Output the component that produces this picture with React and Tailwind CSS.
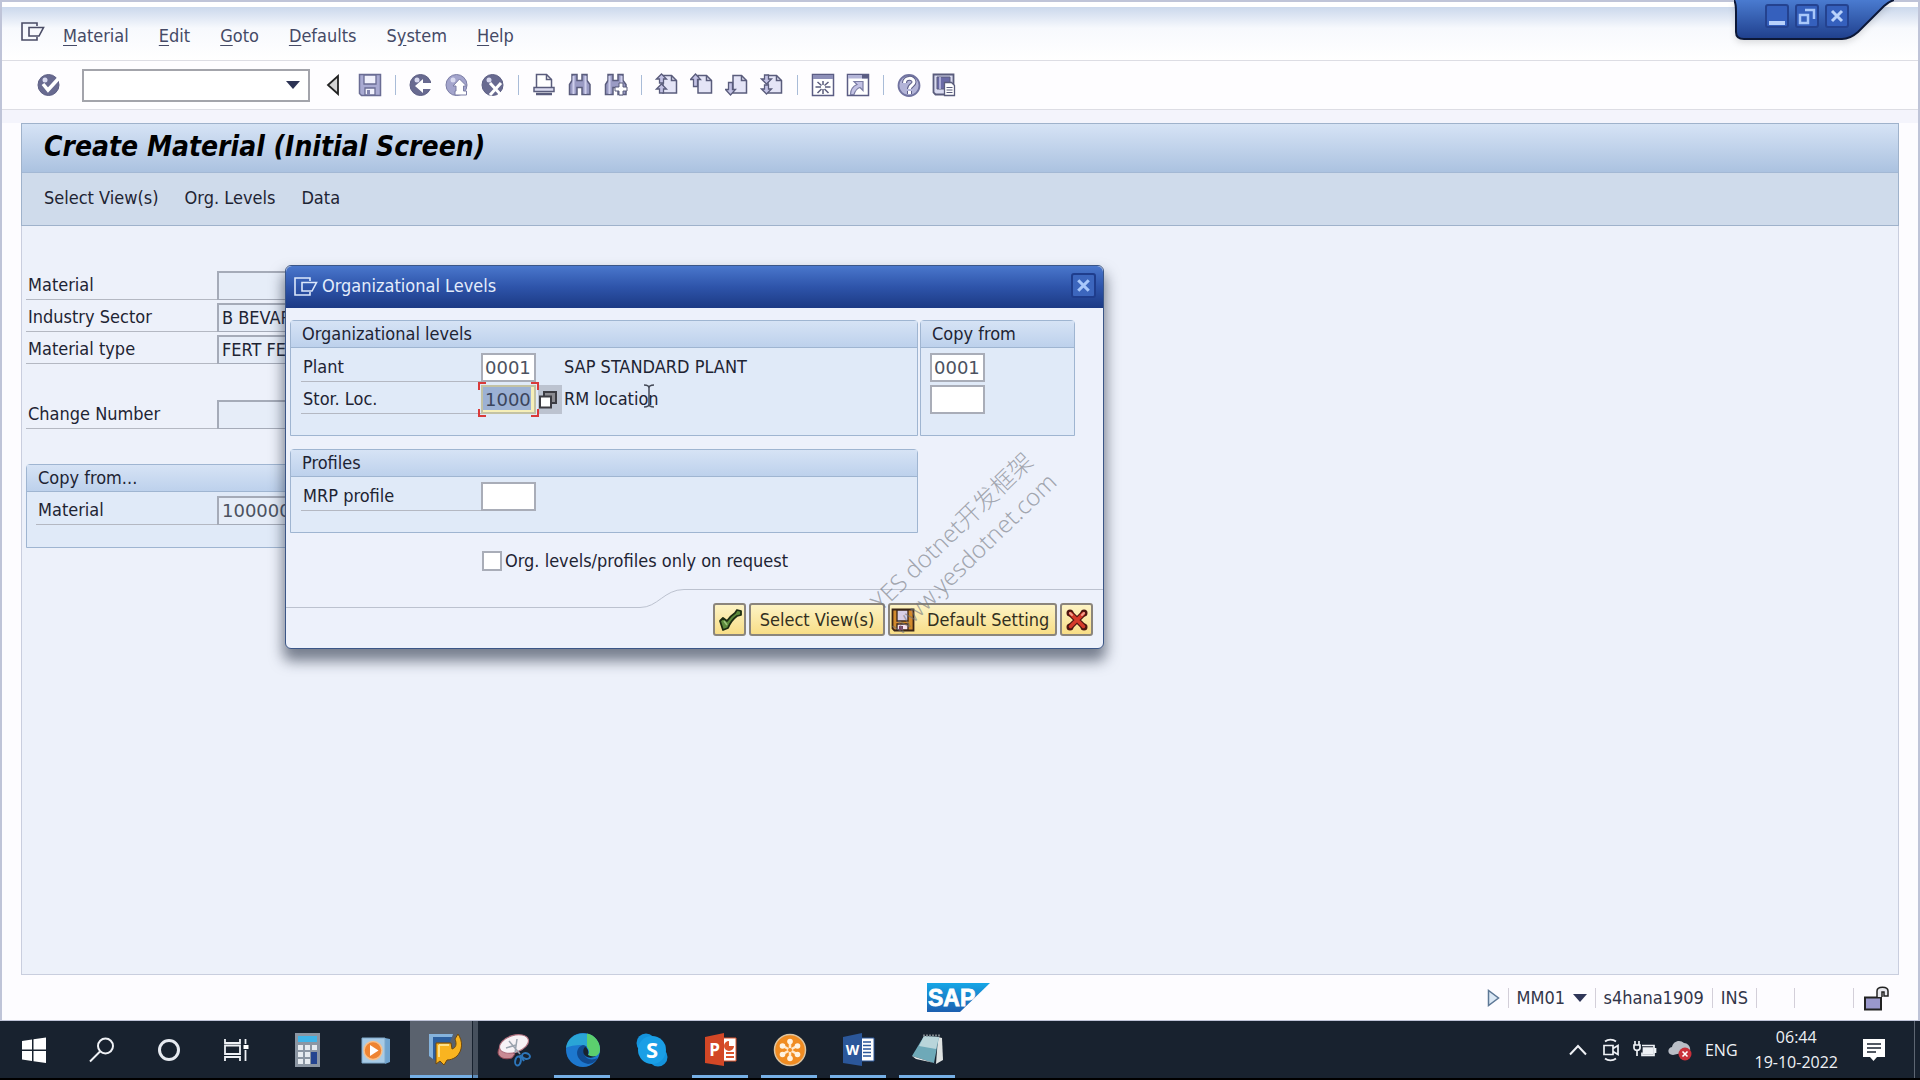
import React from "react";

const FONT = "font-['DejaVu_Sans_Condensed','DejaVu_Sans','Noto_Sans',sans-serif]";
const INK = "#5a5c7c";
const LILAC = "#c3c2e4";

function Icon({ size = 24, className = "", children }) {
  return (
    <svg width={size} height={size} viewBox="0 0 24 24" fill="none" className={"shrink-0 " + className} aria-hidden="true">
      {children}
    </svg>
  );
}

function ExitGlyph({ stroke }) {
  return (
    <svg width="24" height="20" viewBox="0 0 24 20" fill="none" stroke={stroke} strokeWidth="1.6" className="shrink-0" aria-hidden="true">
      <path d="M16 4V1H1v17h15v-3" />
      <path d="M8 5.500h14.500l-4.500 8.500H8z" />
    </svg>
  );
}

function Ball({ light, children }) {
  return (
    <Icon>
      <circle cx="11.500" cy="12" r="10.500" fill={light ? "#a3a4cc" : "#686a90"} stroke={light ? "#7c7ea6" : "#5d5f84"} />
      <circle cx="8" cy="7" r="2.500" fill="#d9daf0" />
      {children}
    </Icon>
  );
}

function Page({ arrow }) {
  return (
    <Icon>
      <path d="M8 2.500h8.500l5 5v12.500H8z" fill="#e4e4f6" stroke={INK} strokeWidth="1.500" />
      <path d="M16.500 2.500v5h5" stroke={INK} strokeWidth="1.500" />
      <g fill={LILAC} stroke={INK} strokeWidth="1.300">{arrow}</g>
    </Icon>
  );
}

function Binoculars({ plus }) {
  return (
    <Icon>
      <path d="M4 1.500h5v6h5v-6h5v6l3 4v10h-8v-7h-5v7H1.500v-10L4 7.500z" fill="#9a9bc4" stroke={INK} strokeWidth="1.500" />
      <path d="M5.500 3v18M17.500 3v18" stroke="#cfd0ec" strokeWidth="2" />
      {plus && <path d="M15 10h4v4h4v4h-4v4h-4v-4h-4v-4h4z" fill="#fff" stroke={INK} strokeWidth="1" />}
    </Icon>
  );
}

function ToolButton({ label, children }) {
  return (
    <button type="button" aria-label={label} className="flex w-[22px] justify-center">
      {children}
    </button>
  );
}

const Sep = () => <span className="h-5 w-px shrink-0 bg-[#a9bcd8]" />;

function MenuBar() {
  const items = [
    ["", "M", "aterial"],
    ["", "E", "dit"],
    ["", "G", "oto"],
    ["", "D", "efaults"],
    ["S", "y", "stem"],
    ["", "H", "elp"],
  ];
  return (
    <nav className="flex h-[54px] items-center border-b border-[#dddde4] bg-linear-to-b from-[#cbd8ec] via-[#f7f9fd] via-40% to-white pl-[19px]">
      <button type="button" aria-label="System menu" className="-mt-1 mr-[18px]">
        <ExitGlyph stroke="#4a4c66" />
      </button>
      <div className="flex gap-[30px] pt-1 text-lg text-[#454a66]">
        {items.map(([a, b, c]) => (
          <button type="button" key={b + c}>
            {a}
            <span className="underline underline-offset-3">{b}</span>
            {c}
          </button>
        ))}
      </div>
    </nav>
  );
}

function ToolBar() {
  return (
    <div className="flex h-[49px] items-center border-b border-[#dddde4] bg-[#fefdff] pl-9">
      <ToolButton label="Enter">
        <Ball>
          <path d="M6 11l5 6L22 5" stroke="#fff" strokeWidth="3.500" />
        </Ball>
      </ToolButton>
      <div className="relative ml-[22px] flex h-[33px] w-[228px] items-center border-2 border-[#a3a4ab] bg-white">
        <input aria-label="Command field" className="h-full w-full bg-transparent px-2 text-lg outline-none" />
        <button type="button" aria-label="Command history" className="mr-2 shrink-0">
          <svg width="14" height="8" viewBox="0 0 14 8" aria-hidden="true">
            <path d="M0 0h14L7 8z" fill="#2c3354" />
          </svg>
        </button>
      </div>
      <button type="button" aria-label="Collapse" className="mr-[19px] ml-4">
        <svg width="14" height="22" viewBox="0 0 14 22" aria-hidden="true">
          <path d="M12 2v18L2 11z" fill="#d4d4d4" stroke="#222" strokeWidth="1.800" />
        </svg>
      </button>
      <div className="flex items-center gap-[14px]">
        <ToolButton label="Save">
          <Icon>
            <path d="M1.500 1.500h21v21h-19l-2-2z" fill="#a9aad2" stroke="#6a6c94" strokeWidth="1.500" />
            <path d="M6 2h12v9H6zM7 15h10v7H7z" fill="#f1f1fc" stroke="#6a6c94" strokeWidth="1.300" />
            <path d="M9 17h3v5H9z" fill="#8385ae" />
          </Icon>
        </ToolButton>
        <Sep />
        <ToolButton label="Back">
          <Ball>
            <path d="M6 13l8-7v4h9v6h-9v4z" fill="#fff" />
          </Ball>
        </ToolButton>
        <ToolButton label="Exit">
          <Ball light>
            <path d="M14.500 6l7 7h-3v5h3v4H10v-4h1v-5H8z" fill="#fff" stroke="#7c7ea6" />
          </Ball>
        </ToolButton>
        <ToolButton label="Cancel">
          <Ball>
            <path d="M9 10l11 12M20 10L9 22" stroke="#fff" strokeWidth="3" />
          </Ball>
        </ToolButton>
        <Sep />
        <ToolButton label="Print">
          <Icon>
            <path d="M4.500 14V1.500h10l5 5V14" fill="#fff" stroke={INK} strokeWidth="1.500" />
            <path d="M14.500 1.500v5h5" stroke={INK} strokeWidth="1.500" />
            <path d="M2 14.500h20v4H2z" fill="#dcdcf0" stroke={INK} strokeWidth="1.500" />
            <path d="M4 21h16" stroke={INK} strokeWidth="2.500" />
          </Icon>
        </ToolButton>
        <ToolButton label="Find">
          <Binoculars />
        </ToolButton>
        <ToolButton label="Find next">
          <Binoculars plus />
        </ToolButton>
        <Sep />
        <div className="flex gap-[13px]">
          <ToolButton label="First page">
            <Page arrow={<><path d="M6.500 1l5 5h-3v4h-4V6h-3z" /><path d="M6.500 11l5 5h-3v4h-4v-4h-3z" /></>} />
          </ToolButton>
          <ToolButton label="Previous page">
            <Page arrow={<path d="M5.500 1l5 5.500h-3v7h-4v-7h-3z" />} />
          </ToolButton>
          <ToolButton label="Next page">
            <Page arrow={<path d="M5.500 22l5-5.500h-3v-7h-4v7h-3z" />} />
          </ToolButton>
          <ToolButton label="Last page">
            <Page arrow={<><path d="M6.500 11l-5-5h3V2h4v4h3z" /><path d="M6.500 21l-5-5h3v-4h4v4h3z" /></>} />
          </ToolButton>
        </div>
        <Sep />
        <div className="flex gap-[13px]">
          <ToolButton label="New session">
            <Icon>
              <path d="M1.500 1.500h21v21h-21z" fill="#fff" stroke="#5b5d84" strokeWidth="1.500" />
              <path d="M2 2h20v4H2z" fill="#8d8fb8" />
              <path d="M12 8v4M12 16v5M4.500 14H10M14 14h5.500M6.500 9l4 3.500M17.500 9l-4 3.500M6.500 20l4-4M17.500 20l-4-4" stroke={INK} strokeWidth="1.500" />
            </Icon>
          </ToolButton>
          <ToolButton label="Create shortcut">
            <Icon>
              <path d="M1.500 1.500h21v21h-21z" fill="#fff" stroke="#5b5d84" strokeWidth="1.500" />
              <path d="M2 2h20v3.500H2z" fill="#b4b5d8" />
              <path d="M16 2h6v3.500h-6z" fill="#5b5d84" />
              <path d="M8 8.500h9v9l-3-3c-4 1-5 4-6 7H4.500c0-5 2-8 6.500-10z" fill={LILAC} stroke="#7b7da4" strokeWidth="1.200" />
            </Icon>
          </ToolButton>
        </div>
        <Sep />
        <div className="flex gap-[13px]">
          <ToolButton label="Help">
            <Icon>
              <circle cx="12" cy="12.500" r="10.500" fill="#b3b4d8" stroke="#7173a0" strokeWidth="1.800" />
              <path d="M7.500 10c0-6 9.500-6 9.500-1 0 3.500-4.500 3-4.500 7M12.500 18v3" stroke="#5d5f88" strokeWidth="5" />
              <path d="M7.500 10c0-6 9.500-6 9.500-1 0 3.500-4.500 3-4.500 7M12.500 18v3" stroke="#fff" strokeWidth="3" />
            </Icon>
          </ToolButton>
          <ToolButton label="Customize layout">
            <Icon>
              <path d="M1.500 1.500h20v20h-18l-2-2z" fill="#d9daf0" stroke={INK} strokeWidth="1.800" />
              <path d="M5 4h13v12H5z" fill="#6a6aa6" stroke={INK} />
              <path d="M8 4v12" stroke="#c3c2e4" strokeWidth="1.500" />
              <path d="M12.500 9.500h7l3 3v10h-10z" fill="#fff" stroke={INK} strokeWidth="1.300" />
              <path d="M14.500 14.500h6M14.500 17h6M14.500 19.500h6" stroke={INK} />
            </Icon>
          </ToolButton>
        </div>
      </div>
    </div>
  );
}

function WindowTab() {
  const box = "size-6 rounded-[3px] border-2 border-[#24428f] bg-[#3560bd]";
  return (
    <div className="absolute top-0 right-[26px] h-[46px] w-[160px]">
      <svg width="160" height="46" viewBox="0 0 160 46" className="absolute inset-0 drop-shadow-md" aria-hidden="true">
        <defs>
          <linearGradient id="tab" x1="0" y1="0" x2="0" y2="1">
            <stop offset="0" stopColor="#4a7bd0" />
            <stop offset="1" stopColor="#1f3f8c" />
          </linearGradient>
        </defs>
        <path d="M0 0Q2 3 2 12V32Q2 39 10 39H108Q116 39 124 32L150 6Q154 2 160 0z" fill="url(#tab)" />
        <path d="M0 0Q2 3 2 12V32Q2 39 10 39H108Q116 39 124 32L150 6Q154 2 160 0" fill="none" stroke="#0c1838" strokeWidth="2" />
      </svg>
      <div className="relative flex gap-[6px] pt-1 pl-[31px]">
        <button type="button" aria-label="Minimize" className={box}>
          <svg viewBox="0 0 20 20" aria-hidden="true"><path d="M2 15h16v4H2z" fill="#b9d2fb" /></svg>
        </button>
        <button type="button" aria-label="Restore" className={box}>
          <svg viewBox="0 0 20 20" fill="none" stroke="#a9c8fa" strokeWidth="2.500" aria-hidden="true"><path d="M3 9h8v8H3zM8 4h9v9" /></svg>
        </button>
        <button type="button" aria-label="Close" className={box}>
          <svg viewBox="0 0 20 20" fill="none" stroke="#b9d2fb" strokeWidth="3" aria-hidden="true"><path d="M5 5l10 10M15 5L5 15" /></svg>
        </button>
      </div>
    </div>
  );
}

function Group({ title, className = "", children }) {
  return (
    <fieldset className={"rounded-t-sm border border-[#9fb5d1] bg-[#e0eaf8] " + className}>
      <div className="h-[27px] border-b border-[#9fb5d1] bg-linear-to-b from-[#d6e3f5] to-[#bdd1ec] pl-[11px] text-lg leading-[25px]">{title}</div>
      {children}
    </fieldset>
  );
}

function Row({ id, label, labelClass, children }) {
  return (
    <div className="flex h-[29px]">
      <label htmlFor={id} className={"shrink-0 border-b border-[#b4b8c2] pl-[2px] leading-7 " + labelClass}>{label}</label>
      {children}
    </div>
  );
}

function LockedField({ id, value, digits }) {
  return (
    <input
      id={id}
      readOnly
      defaultValue={value}
      className={"w-[330px] border border-t-2 border-l-2 border-[#a5abb8] bg-[#e6edf8] pl-[3px] outline-none " + (digits ? "font-['DejaVu_Sans',sans-serif] text-[#4c5260]" : "")}
    />
  );
}

function CodeField({ id, value = "", label }) {
  return (
    <input
      id={id}
      aria-label={label}
      defaultValue={value}
      className="block h-[29px] w-[55px] border-2 border-[#a9adb8] bg-white pl-[2px] font-['DejaVu_Sans',sans-serif] text-lg text-[#4c5260] outline-none"
    />
  );
}

function FormArea() {
  return (
    <form className="pt-[45px] pl-1 text-lg">
      <div className="flex flex-col gap-[3px]">
        <Row id="material" label="Material" labelClass="w-[191px]"><LockedField id="material" value="" /></Row>
        <Row id="sector" label="Industry Sector" labelClass="w-[191px]"><LockedField id="sector" value="B BEVARAGE" /></Row>
        <Row id="type" label="Material type" labelClass="w-[191px]"><LockedField id="type" value="FERT FERT" /></Row>
      </div>
      <div className="mt-9">
        <Row id="change" label="Change Number" labelClass="w-[191px]"><LockedField id="change" value="" /></Row>
      </div>
      <Group title="Copy from..." className="mt-[35px] w-[640px] pb-[22px]">
        <div className="pt-1 pl-[9px]">
          <Row id="copymat" label="Material" labelClass="w-[181px]"><LockedField id="copymat" value="1000001" digits /></Row>
        </div>
      </Group>
    </form>
  );
}

const goldButton =
  "flex h-[33px] items-center justify-center rounded-[3px] border-2 border-[#8b857c] bg-linear-to-b from-[#fdf3c4] to-[#f8dd86] text-[#33301f]";

function Dialog() {
  return (
    <section
      role="dialog"
      aria-label="Organizational Levels"
      className="absolute top-[265px] left-[285px] w-[819px] rounded-md border border-[#3b5687] bg-[#edf1fb] text-lg text-[#1e2433] shadow-[0_10px_14px_2px_rgba(40,50,70,0.6)]"
    >
      <header className="flex h-[42px] items-center rounded-t-md bg-linear-to-b from-[#4a77cc] via-[#2e54aa] to-[#1c3a84] pr-[7px] pl-2 text-[#e3ecfb]">
        <ExitGlyph stroke="#dbe7fb" />
        <h2 className="ml-1 flex-1 pb-[2px]">Organizational Levels</h2>
        <button type="button" aria-label="Close dialog" className="mb-1 size-[25px] rounded-[3px] border-2 border-[#1f3d8c] bg-[#3c66bd]">
          <svg viewBox="0 0 20 20" fill="none" stroke="#a9c8fa" strokeWidth="3" aria-hidden="true"><path d="M5 5l10 10M15 5L5 15" /></svg>
        </button>
      </header>

      <div className="flex gap-[2px] pt-3 pl-1">
        <Group title="Organizational levels" className="w-[628px] pb-[21px]">
          <div className="flex flex-col gap-[3px] pt-[5px] pl-[10px]">
            <Row id="plant" label="Plant" labelClass="w-[180px]">
              <CodeField id="plant" value="0001" />
              <span className="ml-7 leading-7">SAP STANDARD PLANT</span>
            </Row>
            <Row id="stor" label="Stor. Loc." labelClass="w-[180px]">
              <div className="relative">
                <input
                  id="stor"
                  defaultValue="1000"
                  className="block h-[29px] w-[55px] border-2 border-[#c3c2a4] bg-[#9cb1d4] pl-[2px] font-['DejaVu_Sans',sans-serif] text-lg text-[#3b455c] shadow-[inset_-3px_-2px_0_#f6efb8] outline-none"
                />
                <svg width="61" height="35" viewBox="0 0 61 35" fill="none" stroke="#d93a3a" strokeWidth="2" className="pointer-events-none absolute -top-[3px] -left-[3px]" aria-hidden="true">
                  <path d="M1 8V1h7M53 1h7v7M60 27v7h-7M8 34H1v-7" />
                </svg>
              </div>
              <button type="button" aria-label="Possible entries" className="ml-[2px] flex h-[29px] w-6 items-center justify-start bg-[#bcc3d0]">
                <svg width="20" height="20" viewBox="0 0 20 20" fill="#fff" stroke="#3c3c42" strokeWidth="2" aria-hidden="true">
                  <path d="M6 2h12v11H6z" fill="#8b8b90" />
                  <path d="M2 6.500h11v11H2z" />
                </svg>
              </button>
              <span className="ml-[2px] leading-7">RM location</span>
            </Row>
          </div>
        </Group>
        <Group title="Copy from" className="w-[155px]">
          <div className="flex flex-col gap-[3px] pt-[5px] pl-[9px]">
            <CodeField label="Copy from plant" value="0001" />
            <CodeField label="Copy from storage location" />
          </div>
        </Group>
      </div>

      <Group title="Profiles" className="mt-[13px] ml-1 w-[628px] pb-[21px]">
        <div className="pt-[5px] pl-[10px]">
          <Row id="mrp" label="MRP profile" labelClass="w-[180px]">
            <CodeField id="mrp" />
          </Row>
        </div>
      </Group>

      <label className="mt-[14px] ml-[196px] flex items-center gap-[3px]">
        <input type="checkbox" className="size-5 appearance-none border-2 border-[#a9adb8] bg-white" />
        Org. levels/profiles only on request
      </label>

      <footer className="mt-[14px]">
        <div className="flex h-[19px]">
          <div className="w-[354px] border-b border-[#bcc2cf]" />
          <svg width="44" height="19" viewBox="0 0 44 19" fill="none" stroke="#bcc2cf" aria-hidden="true">
            <path d="M0 18.500C18 18.500 24 0.500 44 0.500" />
          </svg>
          <div className="flex-1 border-t border-[#bcc2cf]" />
        </div>
        <div className="-mt-[5px] flex justify-end gap-[3px] pr-[10px] pb-3">
          <button type="button" aria-label="Continue" className={goldButton + " w-[33px]"}>
            <Icon>
              <path d="M2 13l3-3 4 3c2-3 5-6 8-8l2-3 4 1v4l-4 1c-4 3-7 7-9 12l-5 2c-1-3-2-6-3-9z" fill="#5c8a3c" stroke="#1c2c12" strokeWidth="1.800" strokeLinejoin="round" />
              <path d="M6 13l3 4" stroke="#9cc47c" strokeWidth="1.500" />
            </Icon>
          </button>
          <button type="button" className={goldButton + " w-[136px]"}>Select View(s)</button>
          <button type="button" className={goldButton + " w-[169px] justify-start gap-3 pl-[1px]"}>
            <Icon>
              <path d="M1.500 1.500h21v21h-19l-2-2z" fill="#d28a2c" stroke="#3a2416" strokeWidth="1.800" />
              <path d="M6 2h11v11H6z" fill="#d8cfe6" stroke="#3a2416" strokeWidth="1.300" />
              <path d="M6 16h11v6H6z" fill="#f6e0ee" stroke="#3a2416" strokeWidth="1.300" />
              <path d="M8 18h4v4H8z" fill="#7a4060" />
            </Icon>
            Default Setting
          </button>
          <button type="button" aria-label="Cancel" className={goldButton + " w-[33px]"}>
            <Icon>
              <g strokeLinecap="round">
                <path d="M5.500 5.500l13 13M18.500 5.500l-13 13" stroke="#4e1610" strokeWidth="6" />
                <circle cx="5" cy="5" r="3.500" fill="#4e1610" />
                <circle cx="19" cy="5" r="3.500" fill="#4e1610" />
                <circle cx="5" cy="19" r="3.500" fill="#4e1610" />
                <circle cx="19" cy="19" r="3.500" fill="#4e1610" />
                <path d="M5.500 5.500l13 13M18.500 5.500l-13 13" stroke="#d63a2a" strokeWidth="3.500" />
                <path d="M5 5l2 2M19 5l-2 2" stroke="#f2a08c" strokeWidth="2" />
              </g>
            </Icon>
          </button>
        </div>
      </footer>

      <svg width="14" height="24" viewBox="0 0 14 24" fill="none" stroke="#444a58" strokeWidth="1.500" className="pointer-events-none absolute top-[118px] left-[356px]" aria-hidden="true">
        <path d="M2 1c3 0 5 1 5 3 0-2 2-3 5-3M7 4v16M2 23c3 0 5-1 5-3 0 2 2 3 5 3" />
      </svg>
    </section>
  );
}

function Watermark() {
  return (
    <div className="pointer-events-none absolute top-[511px] left-[842px] w-[240px] -rotate-44 text-center font-['Noto_Sans','Noto_Sans_CJK_SC',sans-serif] text-2xl leading-[31px] font-light whitespace-nowrap text-[#70747c]/60">
      YES dotnet开发框架
      <br />
      www.yesdotnet.com
    </div>
  );
}

function StatusSep({ className = "" }) {
  return <span className={"block h-5 w-px bg-[#d3cfd9] " + className} />;
}

function StatusBar() {
  return (
    <footer className="flex h-[45px] items-center text-lg text-[#33364a]">
      <div className="flex flex-1 justify-end pr-[496px]">
        <svg width="64" height="30" viewBox="0 0 64 30" role="img" aria-label="SAP">
          <defs>
            <linearGradient id="sap" x1="0" y1="0" x2="0" y2="1">
              <stop offset="0" stopColor="#16a6e6" />
              <stop offset="1" stopColor="#1c5fb0" />
            </linearGradient>
          </defs>
          <path d="M0 0h63L33 29H0z" fill="url(#sap)" />
          <text x="1" y="23" fontFamily="Liberation Sans" fontWeight="700" fontSize="23" fill="#fff" stroke="#fff" strokeWidth="0.800">SAP</text>
        </svg>
      </div>
      <div className="flex items-center pr-[29px]">
        <button type="button" aria-label="Expand status">
          <svg width="13" height="18" viewBox="0 0 13 18" aria-hidden="true"><path d="M1.500 1.500v15l10-7.500z" fill="#dbe8f5" stroke="#5d7896" strokeWidth="1.500" /></svg>
        </button>
        <span className="ml-2 flex items-center gap-2">
          <StatusSep />
          <button type="button" className="flex w-[70px] items-center justify-between">
            MM01
            <svg width="14" height="8" viewBox="0 0 14 8" aria-hidden="true"><path d="M0 0h14L7 8z" fill="#2f3658" /></svg>
          </button>
          <StatusSep />
          <span>s4hana1909</span>
          <StatusSep />
          <span>INS</span>
          <StatusSep />
        </span>
        <StatusSep className="ml-[37px]" />
        <StatusSep className="mr-[9px] ml-[58px]" />
        <svg width="26" height="26" viewBox="0 0 26 26" fill="none" stroke="#222" strokeWidth="2" aria-hidden="true">
          <path d="M2 12.500h16v12H2z" fill="#9a98cc" />
          <path d="M14 12V6c0-5 11-5 11 0v5h-4V7h-2v5" fill="#e8e8ee" strokeWidth="1.500" />
        </svg>
      </div>
    </footer>
  );
}

function TaskButton({ label, wide, open, active, children }) {
  return (
    <button
      type="button"
      aria-label={label}
      className={"relative flex h-full items-center justify-center " + (wide ? "w-[69px] " : "w-[68px] ")}
    >
      {active && (
        <span className="absolute inset-y-0 left-0 flex w-[68px]">
          <span className="w-[62px] border-b-3 border-[#76b0e6] bg-[#5a626e]" />
          <span className="ml-px flex-1 border-b-3 border-[#5d8cba] bg-[#46505d]" />
        </span>
      )}
      <span className="relative">{children}</span>
      {open && <span className="absolute bottom-0 left-[6px] h-[3px] w-[56px] bg-[#76b0e6]" />}
    </button>
  );
}

function Svg({ s = 34, children }) {
  return <svg width={s} height={s} viewBox="0 0 34 34" fill="none" aria-hidden="true">{children}</svg>;
}

function TaskBar() {
  return (
    <div className="flex h-[59px] shrink-0 border-b-2 border-black bg-[#18222f] font-['Open_Sans','Noto_Sans',sans-serif] text-[#eef1f5]">
      <TaskButton label="Start">
        <Svg>
          <path d="M5 8l10-1.500V16.500H5zM16.500 6.200L29 4.500v12H16.500zM5 18h10v10L5 26.500zM16.500 18H29v12l-12.500-1.700z" fill="#fff" />
        </Svg>
      </TaskButton>
      <TaskButton label="Search">
        <Svg>
          <circle cx="20.500" cy="13" r="7.500" stroke="#eef1f5" strokeWidth="2" />
          <path d="M15 18.500L5 28.500" stroke="#eef1f5" strokeWidth="2" />
        </Svg>
      </TaskButton>
      <TaskButton label="Cortana">
        <Svg><circle cx="16" cy="17" r="9.500" stroke="#e6eaf0" strokeWidth="3" /></Svg>
      </TaskButton>
      <TaskButton label="Task view">
        <Svg>
          <path d="M4 6v4h15V6M4 12.500h15v8.500H4zM4 28v-4h15v4M24.500 6v5M24.500 17v11" stroke="#eef1f5" strokeWidth="1.800" />
          <path d="M22.500 12h5v4h-5z" fill="#fff" />
        </Svg>
      </TaskButton>
      <div className="flex flex-1">
        <TaskButton wide label="Calculator">
          <Svg>
            <path d="M5 0h25v34H5z" fill="#8b96a3" />
            <path d="M8 3h19v6H8z" fill="#3fb4e8" />
            <path d="M8 12h5v5H8zM15 12h5v5h-5zM22 12h5v5h-5zM8 19h5v5H8zM15 19h5v5h-5zM8 26h5v5H8zM15 26h5v5h-5z" fill="#e6ebf0" />
            <path d="M21 19h6v12h-6z" fill="#24448f" />
          </Svg>
        </TaskButton>
        <TaskButton wide label="Media player">
          <Svg>
            <path d="M26 5l5 1v23l-5 2z" fill="#6fa3cf" />
            <path d="M3 5h23v25H3z" fill="#a8cbe6" stroke="#7fa9cb" />
            <circle cx="14" cy="17.500" r="9" fill="#ee8432" stroke="#f6c08c" strokeWidth="1.500" />
            <path d="M11 12v11l8.500-5.500z" fill="#fff" />
          </Svg>
        </TaskButton>
        <TaskButton wide active label="SAP Logon">
          <Svg>
            <path d="M1 1h24l-3 8H8v19l-7-5z" fill="#2c5f9e" />
            <path d="M1 1h24l-1 3H5v22l-4-3z" fill="#85b3dc" />
            <path d="M8 10h15l1 6c4-1 5-5 3-10l3-5c5 7 5 17-2 23-3 2-6 3-9 3l-3 5-4-4-4 3z" fill="#f9b420" stroke="#6e480e" strokeLinejoin="round" />
            <path d="M11 12h10M11 12v12" stroke="#fde08a" strokeWidth="2" />
          </Svg>
        </TaskButton>
        <TaskButton wide label="Snipping tool">
          <Svg>
            <path d="M1 20c0-3 1-5 3-7l14 8-3 4C8 27 2 25 1 20z" fill="#c98a94" stroke="#8e4754" />
            <ellipse cx="17" cy="11" rx="15" ry="8.500" transform="rotate(-18 17 11)" fill="#f7f2f6" stroke="#b0707e" strokeWidth="1.200" />
            <path d="M12 8l11 13M20 6l-2 14M9 15l10-3" stroke="#9aa2ae" strokeWidth="1.500" />
            <ellipse cx="29" cy="23" rx="4" ry="2.800" transform="rotate(15 29 23)" stroke="#2d76bb" strokeWidth="2" />
            <ellipse cx="21" cy="28" rx="2.800" ry="4.500" transform="rotate(12 21 28)" stroke="#2d76bb" strokeWidth="2" />
            <path d="M23 22l4 6" stroke="#2d76bb" strokeWidth="2" />
          </Svg>
        </TaskButton>
        <TaskButton wide open label="Microsoft Edge">
          <Svg>
            <circle cx="17" cy="17" r="17" fill="#1d78cf" />
            <path d="M0 15C2-4 32-5 34 16c0 8-8 9-12 6 2-3 0-9-6-10-7 0-13 1-16 3z" fill="#2aa5d6" />
            <path d="M21 .500C29 2 34 9 34 16c0 8-8 9-12 6 2-3 1-6-1-8z" fill="#5ccf6e" />
            <path d="M17 12c-9 3-8 16 5 19 4 0 8-3 10-6-7 3-13 1-14-5-1-4 2-4 3-6-1-1-2-2-4-2z" fill="#114a8f" />
            <path d="M19 14c-3 3-2 8 2 10 3 1 6 1 9-1-3 1-6 0-8-1 1-3 0-7-3-8z" fill="#18222f" />
          </Svg>
        </TaskButton>
        <TaskButton wide label="Skype">
          <Svg>
            <circle cx="11" cy="10" r="9.500" fill="#1493dc" />
            <circle cx="23" cy="24" r="9.500" fill="#1493dc" />
            <circle cx="17" cy="17" r="14" fill="#1a9fe6" />
            <text x="17" y="25" textAnchor="middle" fontFamily="Open Sans" fontWeight="700" fontSize="22" fill="#fff">S</text>
          </Svg>
        </TaskButton>
        <TaskButton wide open label="PowerPoint">
          <Svg>
            <path d="M19 5h13v23H19z" fill="#fff" stroke="#d9522c" />
            <path d="M22 20h8M22 24h8" stroke="#d9522c" strokeWidth="2" />
            <path d="M25 8a5 5 0 1 0 5 5h-5z" fill="#d9522c" />
            <path d="M1 4l19-4v33L1 30z" fill="#d24726" />
            <text x="10.500" y="23" textAnchor="middle" fontFamily="Open Sans" fontWeight="700" fontSize="17" fill="#fff">P</text>
          </Svg>
        </TaskButton>
        <TaskButton wide open label="GoTo Meeting">
          <Svg>
            <circle cx="17" cy="17" r="15.500" fill="#f08c22" stroke="#dcc4a0" strokeWidth="1.500" />
            <path d="M17 7v20M8.300 12l17.400 10M25.700 12L8.300 22" stroke="#ffe9cd" strokeWidth="2.500" />
            <g fill="#fff3e2"><circle cx="17" cy="8.500" r="2.800" /><circle cx="17" cy="25.500" r="2.800" /><circle cx="9.500" cy="13" r="2.800" /><circle cx="24.500" cy="13" r="2.800" /><circle cx="9.500" cy="21.500" r="2.800" /><circle cx="24.500" cy="21.500" r="2.800" /></g>
            <circle cx="17" cy="17" r="2" fill="#f08c22" />
          </Svg>
        </TaskButton>
        <TaskButton wide open label="Word">
          <Svg>
            <path d="M19 5h13v23H19z" fill="#fff" stroke="#2b579a" />
            <path d="M21 9h8M21 12.500h8M21 16h8M21 19.500h8M21 23h8" stroke="#2b579a" strokeWidth="1.500" />
            <path d="M1 4l19-4v33L1 30z" fill="#2b579a" />
            <text x="10.500" y="22" textAnchor="middle" fontFamily="Open Sans" fontWeight="700" fontSize="14" fill="#fff">W</text>
          </Svg>
        </TaskButton>
        <TaskButton wide open label="Notepad">
          <Svg>
            <path d="M27 4l4 1 1 22-7 4z" fill="#dfe3e2" />
            <path d="M13 3l15 1-5 26L1 23z" fill="#6ea9b8" />
            <path d="M13 3l15 1-3 12-17-3z" fill="#b9d5da" />
            <path d="M1 23l22 7 5 1-23-5z" fill="#e6eaea" />
            <path d="M12 2.500h17" stroke="#7b8188" strokeWidth="2" strokeDasharray="2 1" />
          </Svg>
        </TaskButton>
      </div>

      <div className="flex items-center">
        <button type="button" aria-label="Show hidden icons" className="mr-[15px]">
          <svg width="18" height="12" viewBox="0 0 18 12" fill="none" stroke="#eef1f5" strokeWidth="2" aria-hidden="true"><path d="M1 10.500L9 2l8 8.500" /></svg>
        </button>
        <button type="button" aria-label="Meet now" className="mr-[13px]">
          <svg width="18" height="24" viewBox="0 0 18 24" fill="none" stroke="#eef1f5" strokeWidth="1.700" aria-hidden="true">
            <path d="M2 7.500h9v9H2zM11 10.500l5-3v9l-5-3M3 3.500c3-2.500 8-2.500 11 0M3 20.500c3 2.500 8 2.500 11 0" />
          </svg>
        </button>
        <button type="button" aria-label="Battery" className="mr-[11px]">
          <svg width="24" height="20" viewBox="0 0 24 20" fill="none" stroke="#eef1f5" strokeWidth="1.700" aria-hidden="true">
            <path d="M9 5.500h12v10H9v-3M22.500 8v5" />
            <path d="M10.500 8h9v6h-9z" fill="#eef1f5" />
            <path d="M2 1v4M6 1v4M1 5h6v3c0 3-6 3-6 0zM4 10v6" />
          </svg>
        </button>
        <button type="button" aria-label="OneDrive" className="mr-[13px]">
          <svg width="24" height="22" viewBox="0 0 24 22" aria-hidden="true">
            <path d="M5 16c-6 0-6-7-1-8 1-6 8-8 12-4 4 0 7 4 6 8z" fill="#b9bec6" />
            <circle cx="17" cy="15" r="6.500" fill="#c9303a" />
            <path d="M14.500 12.500l5 5M19.500 12.500l-5 5" stroke="#fff" strokeWidth="1.600" />
          </svg>
        </button>
        <button type="button" className="mr-[17px]">ENG</button>
        <time className="mr-6 text-center leading-[25px]">
          06:44
          <br />
          19-10-2022
        </time>
        <button type="button" aria-label="Notifications" className="mr-[28px]">
          <svg width="24" height="24" viewBox="0 0 24 24" aria-hidden="true">
            <path d="M1 1h22v18h-8l-3.500 4L8 19H1z" fill="#fff" />
            <path d="M5 6h14M5 10h14M5 14h9" stroke="#18222f" strokeWidth="1.500" />
          </svg>
        </button>
        <span className="mr-[5px] h-full w-px bg-[#5d6672]" />
      </div>
    </div>
  );
}

export default function App() {
  return (
    <div className={"relative flex h-screen flex-col overflow-hidden bg-[#fdfcff] text-[#1e2433] " + FONT}>
      <div className="flex min-h-0 flex-1 flex-col border-x-2 border-t-2 border-b border-[#bfc4d8]">
        <div className="h-[5px] shrink-0 bg-white" />
        <MenuBar />
        <ToolBar />
        <div className="h-[13px] shrink-0 bg-[#f4f4fc]" />
        <main className="mx-[19px] flex min-h-0 flex-1 flex-col border border-[#c9cede] bg-[#edf1fa]">
          <div className="-mx-px -mt-px border border-[#9fb2cb]">
            <h1 className="h-[49px] border-b border-[#a3b8d4] bg-linear-to-b from-[#d6e3f5] to-[#abc2e0] pl-[22px] text-[28px] leading-[46px] font-bold text-black italic">
              Create Material (Initial Screen)
            </h1>
            <div className="flex h-[52px] items-center gap-[26px] bg-[#cfdbeb] pb-[2px] pl-[22px] text-lg">
              <button type="button">Select View(s)</button>
              <button type="button">Org. Levels</button>
              <button type="button">Data</button>
            </div>
          </div>
          <FormArea />
        </main>
        <StatusBar />
      </div>
      <TaskBar />
      <WindowTab />
      <Dialog />
      <Watermark />
    </div>
  );
}
